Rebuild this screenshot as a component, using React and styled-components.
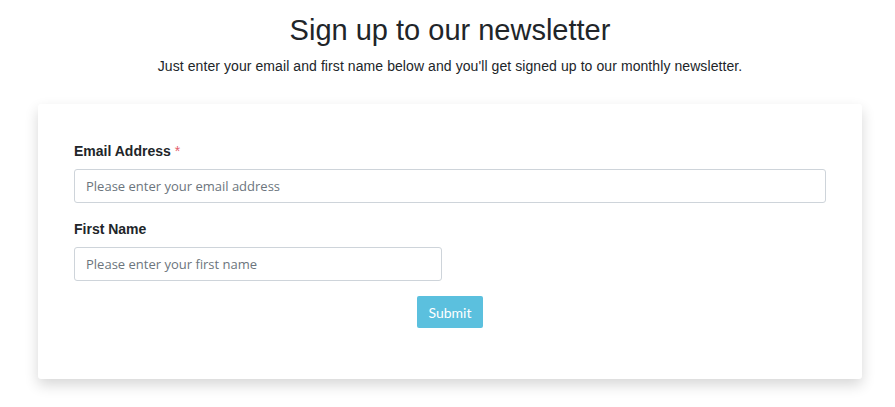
import React from 'react'
import styled, { createGlobalStyle } from 'styled-components'

const Global = createGlobalStyle`
  body {
    margin: 0;
    background: #fff;
    font-family: "Liberation Sans", Arial, sans-serif;
    color: #212529;
  }
`

const Page = styled.div`
  display: flex;
  flex-direction: column;
  align-items: center;
  padding: 12px 33px 28px 38px;
`

const Title = styled.h1`
  margin: 0;
  font-size: 29px;
  font-weight: 400;
  line-height: 36px;
  color: #212529;
`

const Subtitle = styled.p`
  margin: 8px 0 0;
  font-size: 14px;
  line-height: 20px;
  letter-spacing: 0.08px;
`

const Card = styled.form`
  align-self: stretch;
  margin-top: 28px;
  background: #fff;
  border-radius: 3px;
  box-shadow: 0 6px 14px rgba(0, 0, 0, 0.16);
  padding: 38px 36px 51px;
  display: flex;
  flex-direction: column;
`

const Fields = styled.div`
  display: flex;
  flex-direction: column;
  gap: 17px;
`

const Field = styled.div`
  display: flex;
  flex-direction: column;
  gap: 9px;
  width: ${p => (p.half ? 'calc(50% - 8px)' : '100%')};
`

const Label = styled.label`
  font-weight: 700;
  font-size: 14px;
  line-height: 18px;
  color: #212529;
`

const Required = styled.span`
  color: #e4606d;
  font-weight: 400;
  margin-left: 4px;
`

const Input = styled.input`
  box-sizing: border-box;
  height: 34px;
  width: 100%;
  padding: 0 11px;
  border: 1px solid #ced4da;
  border-radius: 3px;
  font-family: "Open Sans", sans-serif;
  font-size: 13px;
  color: #495057;
  outline: none;
  &::placeholder {
    color: #6c757d;
  }
`

const Submit = styled.button`
  align-self: center;
  margin-top: 15px;
  width: 66px;
  height: 32px;
  border: none;
  border-radius: 2px;
  background: #5bc0de;
  color: #fff;
  font-family: Lato, sans-serif;
  font-size: 14px;
  cursor: pointer;
`

const App = () => {
  return (
    <>
      <Global />
      <Page>
        <Title>Sign up to our newsletter</Title>
        <Subtitle>
          Just enter your email and first name below and you'll get signed up to our monthly newsletter.
        </Subtitle>
        <Card onSubmit={e => e.preventDefault()}>
          <Fields>
            <Field>
              <Label>
                Email Address<Required>*</Required>
              </Label>
              <Input type="email" placeholder="Please enter your email address" />
            </Field>
            <Field half>
              <Label>First Name</Label>
              <Input type="text" placeholder="Please enter your first name" />
            </Field>
          </Fields>
          <Submit type="submit">Submit</Submit>
        </Card>
      </Page>
    </>
  )
}

export default App
